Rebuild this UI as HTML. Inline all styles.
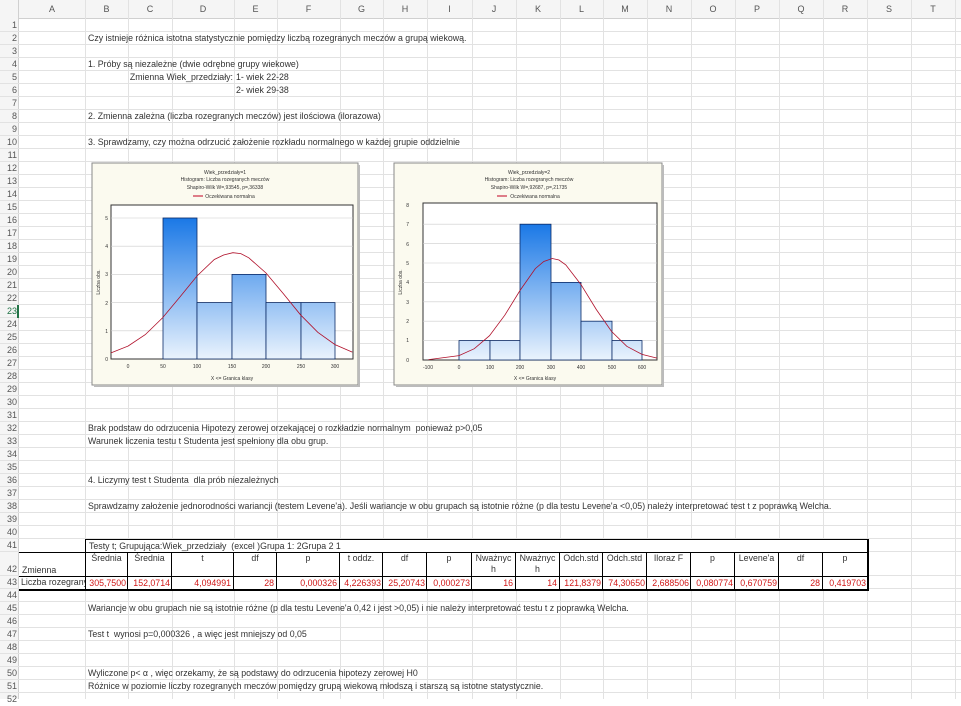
<!DOCTYPE html>
<html><head><meta charset="utf-8"><style>
*{margin:0;padding:0;box-sizing:border-box}
body{width:961px;height:699px;overflow:hidden;background:#fff;position:relative;font-family:"Liberation Sans",sans-serif;font-size:8.8px;color:#333}
.a{position:absolute;white-space:nowrap}
.vl{position:absolute;top:0;width:1px;height:699px;background:#e2e2e2}
.hl{position:absolute;left:0;width:961px;height:1px;background:#e2e2e2}
.ch{position:absolute;top:0;height:19px;line-height:19px;text-align:center;color:#555;font-size:9px}
.rn{position:absolute;left:0;width:17px;text-align:right;color:#555;font-size:9px;line-height:13px}
.t{position:absolute;left:88px;white-space:nowrap;line-height:13px}
.c{position:absolute;border-right:1px solid #000;white-space:nowrap;overflow:hidden}
</style></head><body>
<div class="a" style="left:0;top:0;width:961px;height:19px;background:#f5f5f5;border-bottom:1px solid #d0d0d0"></div>
<div class="a" style="left:0;top:0;width:19px;height:699px;background:#f5f5f5;border-right:1px solid #d0d0d0"></div>
<div class="vl" style="left:85px"></div><div class="vl" style="left:128px"></div><div class="vl" style="left:172px"></div><div class="vl" style="left:234px"></div><div class="vl" style="left:277px"></div><div class="vl" style="left:340px"></div><div class="vl" style="left:383px"></div><div class="vl" style="left:427px"></div><div class="vl" style="left:472px"></div><div class="vl" style="left:516px"></div><div class="vl" style="left:560px"></div><div class="vl" style="left:603px"></div><div class="vl" style="left:647px"></div><div class="vl" style="left:691px"></div><div class="vl" style="left:735px"></div><div class="vl" style="left:779px"></div><div class="vl" style="left:823px"></div><div class="vl" style="left:867px"></div><div class="vl" style="left:911px"></div><div class="vl" style="left:955px"></div>
<div class="a" style="left:0;top:19px;width:961px;height:533px;background:repeating-linear-gradient(to bottom,transparent 0,transparent 12px,#e2e2e2 12px,#e2e2e2 13px)"></div>
<div class="hl" style="top:575px"></div>
<div class="a" style="left:0;top:576px;width:961px;height:123px;background:repeating-linear-gradient(to bottom,transparent 0,transparent 12px,#e2e2e2 12px,#e2e2e2 13px)"></div>
<div class="ch" style="left:19px;width:66px">A</div><div class="ch" style="left:85px;width:43px">B</div><div class="ch" style="left:128px;width:44px">C</div><div class="ch" style="left:172px;width:62px">D</div><div class="ch" style="left:234px;width:43px">E</div><div class="ch" style="left:277px;width:63px">F</div><div class="ch" style="left:340px;width:43px">G</div><div class="ch" style="left:383px;width:44px">H</div><div class="ch" style="left:427px;width:45px">I</div><div class="ch" style="left:472px;width:44px">J</div><div class="ch" style="left:516px;width:44px">K</div><div class="ch" style="left:560px;width:43px">L</div><div class="ch" style="left:603px;width:44px">M</div><div class="ch" style="left:647px;width:44px">N</div><div class="ch" style="left:691px;width:44px">O</div><div class="ch" style="left:735px;width:44px">P</div><div class="ch" style="left:779px;width:44px">Q</div><div class="ch" style="left:823px;width:44px">R</div><div class="ch" style="left:867px;width:44px">S</div><div class="ch" style="left:911px;width:44px">T</div>
<div class="rn" style="top:19px">1<br>2<br>3<br>4<br>5<br>6<br>7<br>8<br>9<br>10<br>11<br>12<br>13<br>14<br>15<br>16<br>17<br>18<br>19<br>20<br>21<br>22<br><span style="color:#217346">23</span><br>24<br>25<br>26<br>27<br>28<br>29<br>30<br>31<br>32<br>33<br>34<br>35<br>36<br>37<br>38<br>39<br>40<br>41</div>
<div class="a" style="left:17px;top:305px;width:2px;height:13px;background:#217346"></div>
<div class="rn" style="top:563px">42</div>
<div class="rn" style="top:576px">43<br>44<br>45<br>46<br>47<br>48<br>49<br>50<br>51<br>52</div>
<div class="t" style="top:32px">Czy istnieje różnica istotna statystycznie pomiędzy liczbą rozegranych meczów a grupą wiekową.</div>
<div class="t" style="top:58px">1. Próby są niezależne (dwie odrębne grupy wiekowe)</div>
<div class="a" style="left:100px;width:133px;text-align:right;top:71px;line-height:13px">Zmienna Wiek_przedziały:</div>
<div class="a" style="left:236px;top:71px;line-height:13px">1- wiek 22-28</div>
<div class="a" style="left:236px;top:84px;line-height:13px">2- wiek 29-38</div>
<div class="t" style="top:110px">2. Zmienna zależna (liczba rozegranych meczów) jest ilościowa (ilorazowa)</div>
<div class="t" style="top:136px">3. Sprawdzamy, czy można odrzucić założenie rozkładu normalnego w każdej grupie oddzielnie</div>
<div class="t" style="top:422px">Brak podstaw do odrzucenia Hipotezy zerowej orzekającej o rozkładzie normalnym&nbsp; ponieważ p&gt;0,05</div>
<div class="t" style="top:435px">Warunek liczenia testu t Studenta jest spełniony dla obu grup.</div>
<div class="t" style="top:474px">4. Liczymy test t Studenta&nbsp; dla prób niezależnych</div>
<div class="t" style="top:500px">Sprawdzamy założenie jednorodności wariancji (testem Levene'a). Jeśli wariancje w obu grupach są istotnie różne (p dla testu Levene'a &lt;0,05) należy interpretować test t z poprawką Welcha.</div>
<div class="t" style="top:602px">Wariancje w obu grupach nie są istotnie różne (p dla testu Levene'a 0,42 i jest &gt;0,05) i nie należy interpretować testu t z poprawką Welcha.</div>
<div class="t" style="top:628px">Test t&nbsp; wynosi p=0,000326 , a więc jest mniejszy od 0,05</div>
<div class="t" style="top:667px">Wyliczone p&lt; α , więc orzekamy, że są podstawy do odrzucenia hipotezy zerowej H0</div>
<div class="t" style="top:680px">Różnice w poziomie liczby rozegranych meczów pomiędzy grupą wiekową młodszą i starszą są istotne statystycznie.</div>

<div class="a" style="left:19px;top:539px;width:849px;height:51px;background:#fff"></div>
<div class="a" style="left:85px;top:539px;width:783px;height:14px;border:1px solid #000;border-bottom:none;line-height:12px;padding-left:3px">Testy t; Grupująca:Wiek_przedziały&nbsp; (excel )Grupa 1: 2Grupa 2 1</div>
<div class="a" style="left:19px;top:552px;width:849px;height:1px;background:#000"></div>
<div class="a" style="left:19px;top:576px;width:849px;height:1px;background:#000"></div>
<div class="a" style="left:19px;top:589px;width:849px;height:2px;background:#000"></div>
<div class="a" style="left:867px;top:539px;width:2px;height:52px;background:#000"></div>
<div class="a" style="left:22px;top:564px;line-height:12px">Zmienna</div>
<div class="a" style="left:21px;top:576px;width:64px;overflow:hidden;line-height:13px">Liczba rozegranych</div>
<div style="position:absolute;left:85px;top:553px;height:37px;line-height:11px;text-align:center">
<div class="c" style="left:0;width:43px;height:37px;border-left:1px solid #000">Średnia</div>
<div class="c" style="left:43px;width:44px;height:37px">Średnia</div>
<div class="c" style="left:87px;width:62px;height:37px">t</div>
<div class="c" style="left:149px;width:43px;height:37px">df</div>
<div class="c" style="left:192px;width:63px;height:37px">p</div>
<div class="c" style="left:255px;width:43px;height:37px">t oddz.</div>
<div class="c" style="left:298px;width:44px;height:37px">df</div>
<div class="c" style="left:342px;width:45px;height:37px">p</div>
<div class="c" style="left:387px;width:44px;height:37px">Nważnyc<br>h</div>
<div class="c" style="left:431px;width:44px;height:37px">Nważnyc<br>h</div>
<div class="c" style="left:475px;width:43px;height:37px">Odch.std</div>
<div class="c" style="left:518px;width:44px;height:37px">Odch.std</div>
<div class="c" style="left:562px;width:44px;height:37px">Iloraz F</div>
<div class="c" style="left:606px;width:44px;height:37px">p</div>
<div class="c" style="left:650px;width:44px;height:37px">Levene'a</div>
<div class="c" style="left:694px;width:44px;height:37px">df</div>
<div class="c" style="left:738px;width:44px;height:37px;border-right:none">p</div>
</div>
<div style="position:absolute;left:85px;top:577px;height:12px;line-height:12px;text-align:right;color:#d01818">
<div class="c" style="left:0;width:43px;height:12px;padding-right:1px">305,7500</div>
<div class="c" style="left:43px;width:44px;height:12px;padding-right:1px">152,0714</div>
<div class="c" style="left:87px;width:62px;height:12px;padding-right:2px">4,094991</div>
<div class="c" style="left:149px;width:43px;height:12px;padding-right:2px">28</div>
<div class="c" style="left:192px;width:63px;height:12px;padding-right:2px">0,000326</div>
<div class="c" style="left:255px;width:43px;height:12px;padding-right:1px">4,226393</div>
<div class="c" style="left:298px;width:44px;height:12px;padding-right:1px">25,20743</div>
<div class="c" style="left:342px;width:45px;height:12px;padding-right:1px">0,000273</div>
<div class="c" style="left:387px;width:44px;height:12px;padding-right:2px">16</div>
<div class="c" style="left:431px;width:44px;height:12px;padding-right:2px">14</div>
<div class="c" style="left:475px;width:43px;height:12px;padding-right:1px">121,8379</div>
<div class="c" style="left:518px;width:44px;height:12px;padding-right:1px">74,30650</div>
<div class="c" style="left:562px;width:44px;height:12px;padding-right:1px">2,688506</div>
<div class="c" style="left:606px;width:44px;height:12px;padding-right:1px">0,080774</div>
<div class="c" style="left:650px;width:44px;height:12px;padding-right:1px">0,670759</div>
<div class="c" style="left:694px;width:44px;height:12px;padding-right:2px">28</div>
<div class="c" style="left:738px;width:44px;height:12px;padding-right:1px;border-right:none">0,419703</div>
</div>

<svg class="a" style="left:0;top:0" width="961" height="699" font-family="Liberation Sans,sans-serif">
<defs>
<linearGradient id="g1" gradientUnits="userSpaceOnUse" x1="0" y1="218" x2="0" y2="359"><stop offset="0" stop-color="#1a78e6"/><stop offset="1" stop-color="#eaf3fd"/></linearGradient>
<linearGradient id="g2" gradientUnits="userSpaceOnUse" x1="0" y1="224" x2="0" y2="360"><stop offset="0" stop-color="#1a78e6"/><stop offset="1" stop-color="#eaf3fd"/></linearGradient>
</defs>
<rect x="92" y="163" width="266" height="222" fill="#fbfaef" stroke="#8a8a8a"/>
<rect x="358" y="165" width="2" height="222" fill="#bbb"/><rect x="94" y="385" width="266" height="2" fill="#bbb"/>
<g font-size="5" text-anchor="middle" fill="#333">
<text x="225" y="174">Wiek_przedziały=1</text>
<text x="225" y="181">Histogram: Liczba rozegranych meczów</text>
<text x="225" y="189">Shapiro-Wilk W=,93545, p=,36338</text>
<line x1="193" y1="196" x2="203" y2="196" stroke="#c00020"/><text x="230" y="198">Oczekiwana normalna</text>
</g>
<rect x="111" y="205" width="242" height="154" fill="#fff" stroke="#333"/>
<g stroke="#ccc" stroke-width="0.6"><line x1="111" y1="330.8" x2="353" y2="330.8"/><line x1="111" y1="302.6" x2="353" y2="302.6"/><line x1="111" y1="274.4" x2="353" y2="274.4"/><line x1="111" y1="246.2" x2="353" y2="246.2"/><line x1="111" y1="218" x2="353" y2="218"/></g>
<g fill="url(#g1)" stroke="#0b2a66" stroke-width="0.8">
<rect x="163" y="218" width="34" height="141"/><rect x="197" y="302.6" width="35" height="56.4"/><rect x="232" y="274.4" width="34" height="84.6"/><rect x="266" y="302.6" width="35" height="56.4"/><rect x="301" y="302.6" width="34" height="56.4"/>
</g>
<polyline fill="none" stroke="#b0102a" stroke-width="0.8" points="111,352.9 128,346.1 145.3,334.6 162.5,317.9 179.8,297.1 197,276 214.3,259.5 223.6,255 232.9,252.7 240.8,253.6 248.8,257.8 266,273 283.3,293.6 300.5,314.8 317.8,332.3 335,344.6 352.3,352.1"/>
<g font-size="5" fill="#333" text-anchor="end"><text x="108" y="361">0</text><text x="108" y="333">1</text><text x="108" y="305">2</text><text x="108" y="276">3</text><text x="108" y="248">4</text><text x="108" y="220">5</text></g>
<g font-size="5" fill="#333" text-anchor="middle"><text x="128" y="368">0</text><text x="163" y="368">50</text><text x="197" y="368">100</text><text x="232" y="368">150</text><text x="266" y="368">200</text><text x="301" y="368">250</text><text x="335" y="368">300</text><text x="232" y="380">X &lt;= Granica klasy</text></g>
<text font-size="5" fill="#333" text-anchor="middle" transform="translate(100,282) rotate(-90)">Liczba obs.</text>
<rect x="394" y="163" width="268" height="222" fill="#fbfaef" stroke="#8a8a8a"/>
<rect x="662" y="165" width="2" height="222" fill="#bbb"/><rect x="396" y="385" width="268" height="2" fill="#bbb"/>
<g font-size="5" text-anchor="middle" fill="#333">
<text x="529" y="174">Wiek_przedziały=2</text>
<text x="529" y="181">Histogram: Liczba rozegranych meczów</text>
<text x="529" y="189">Shapiro-Wilk W=,92687, p=,21735</text>
<line x1="497" y1="196" x2="507" y2="196" stroke="#c00020"/><text x="535" y="198">Oczekiwana normalna</text>
</g>
<rect x="423" y="203" width="234" height="157" fill="#fff" stroke="#333"/>
<g stroke="#ccc" stroke-width="0.6"><line x1="423" y1="340.6" x2="657" y2="340.6"/><line x1="423" y1="321.2" x2="657" y2="321.2"/><line x1="423" y1="301.8" x2="657" y2="301.8"/><line x1="423" y1="282.4" x2="657" y2="282.4"/><line x1="423" y1="263" x2="657" y2="263"/><line x1="423" y1="243.6" x2="657" y2="243.6"/><line x1="423" y1="224.2" x2="657" y2="224.2"/></g>
<g fill="url(#g2)" stroke="#0b2a66" stroke-width="0.8">
<rect x="459" y="340.6" width="31" height="19.4"/><rect x="490" y="340.6" width="30" height="19.4"/><rect x="520" y="224.2" width="31" height="135.8"/><rect x="551" y="282.4" width="30" height="77.6"/><rect x="581" y="321.2" width="31" height="38.8"/><rect x="612" y="340.6" width="30" height="19.4"/>
</g>
<polyline fill="none" stroke="#b0102a" stroke-width="0.8" points="428.5,359.6 459,355.6 474.3,348.7 489.5,335.7 504.8,315.2 520,290.5 535.3,268.6 543.8,261.5 552.3,258.5 559,260 565.8,264.9 581,284.6 596.3,309.5 611.5,331.4 626.8,346.3 642,354.4 657,358.1"/>
<g font-size="5" fill="#333" text-anchor="end"><text x="409" y="362">0</text><text x="409" y="342">1</text><text x="409" y="323">2</text><text x="409" y="304">3</text><text x="409" y="284">4</text><text x="409" y="265">5</text><text x="409" y="246">6</text><text x="409" y="226">7</text><text x="409" y="207">8</text></g>
<g font-size="5" fill="#333" text-anchor="middle"><text x="428" y="369">-100</text><text x="459" y="369">0</text><text x="490" y="369">100</text><text x="520" y="369">200</text><text x="551" y="369">300</text><text x="581" y="369">400</text><text x="612" y="369">500</text><text x="642" y="369">600</text><text x="535" y="380">X &lt;= Granica klasy</text></g>
<text font-size="5" fill="#333" text-anchor="middle" transform="translate(402,282) rotate(-90)">Liczba obs.</text>
</svg>
</body></html>
